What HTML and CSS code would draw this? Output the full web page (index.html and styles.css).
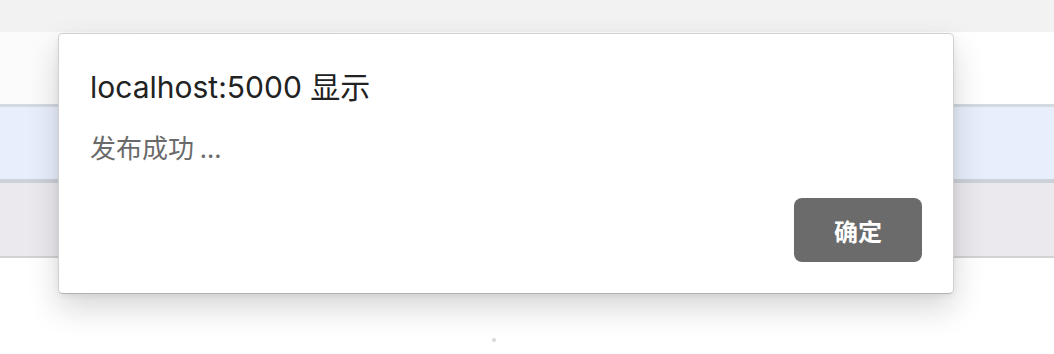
FILE: index.html
```html
<!DOCTYPE html>
<html lang="zh-CN">
<head>
<meta charset="utf-8">
<title>localhost:5000</title>
<link rel="stylesheet" href="styles.css">
</head>
<body>
<div class="page">
  <div class="band topbar"></div>
  <div class="band blank"></div>
  <div class="band line line-blue"></div>
  <div class="band row-blue"></div>
  <div class="band line line-mid"></div>
  <div class="band row-gray"></div>
  <div class="band line line-gray"></div>
  <div class="band rest"><span class="dot"></span></div>
</div>

<div class="dialog" role="alertdialog">
  <div class="title">localhost:5000 显示</div>
  <div class="message">发布成功 ...</div>
  <div class="actions">
    <button class="ok">确定</button>
  </div>
</div>
</body>
</html>
```

FILE: styles.css
```css
html, body {
  margin: 0;
  padding: 0;
  width: 1054px;
  height: 354px;
  overflow: hidden;
  background: #ffffff;
  font-family: "Inter", "Noto Sans CJK SC", sans-serif;
}

.page {
  display: flex;
  flex-direction: column;
  height: 354px;
}

.band { flex: none; }
.topbar { height: 32px; background: #f2f2f2; }
.blank { height: 72px; background: linear-gradient(to right, #fbfbfb, #ffffff 40%); }
.line { height: 3px; }
.line-blue { background: #d3d9e1; }
.row-blue { height: 72px; background: #e8effc; }
.line-mid { height: 4px; background: #cdd1d8; }
.row-gray { height: 73px; background: #ebe9ee; }
.line-gray { height: 2px; background: #d2d2d2; }
.rest { flex: 1; background: #ffffff; position: relative; }

.dot {
  position: absolute;
  left: 492px;
  top: 80px;
  width: 4px;
  height: 4px;
  border-radius: 50%;
  background: #d8d8d8;
}

.dialog {
  position: absolute;
  left: 58px;
  top: 33px;
  width: 896px;
  height: 261px;
  box-sizing: border-box;
  background: #ffffff;
  border: 1px solid rgba(0, 0, 0, 0.18);
  border-bottom-color: rgba(0, 0, 0, 0.3);
  border-radius: 5px;
  box-shadow: 0 14px 32px rgba(0, 0, 0, 0.16), 0 2px 6px rgba(0, 0, 0, 0.06);
  padding: 35px 31px 31px 31px;
  display: flex;
  flex-direction: column;
}

.title {
  font-size: 30px;
  line-height: 36px;
  color: #222222;
}

.message {
  margin-top: 26px;
  font-family: "Noto Sans CJK SC", sans-serif;
  font-size: 26px;
  line-height: 32px;
  color: #6a6a6a;
}

.actions {
  margin-top: auto;
  display: flex;
  justify-content: flex-end;
}

.ok {
  width: 128px;
  height: 64px;
  border: none;
  border-radius: 8px;
  background: #6b6b6b;
  color: #ffffff;
  font-family: "Noto Sans CJK SC", sans-serif;
  font-weight: 700;
  font-size: 24px;
  padding: 0;
}
```
